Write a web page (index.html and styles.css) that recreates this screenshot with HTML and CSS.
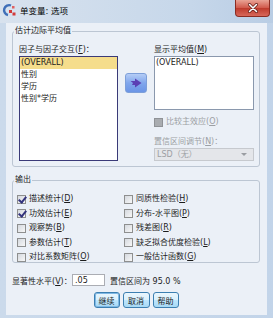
FILE: index.html
```html
<!DOCTYPE html>
<html lang="zh-CN">
<head>
    <meta charset="UTF-8">
    <title>单变量: 选项</title>
    <link rel="stylesheet" href="styles.css">
</head>
<body>
    <div class="window">
        <div class="titlebar">
            <svg class="app-icon" width="14" height="14" viewBox="0 0 14 14">
                <path d="M9 2.5 A5 5 0 1 0 6 12" fill="none" stroke="#3f6fb8" stroke-width="2.4"/>
                <rect x="7" y="7" width="3" height="3" fill="#d23a3a"/>
                <rect x="10.5" y="9.5" width="3" height="3" fill="#d23a3a"/>
                <rect x="10" y="3" width="2.5" height="2.5" fill="#e06060"/>
            </svg>
            <span class="title">单变量: 选项</span>
            <div class="close-btn">
                <svg width="12" height="10" viewBox="0 0 12 10">
                    <path d="M2.5 1.5 L9.5 8.5 M9.5 1.5 L2.5 8.5" stroke="#5a1a14" stroke-width="3" stroke-linecap="round"/>
                    <path d="M2.5 1.5 L9.5 8.5 M9.5 1.5 L2.5 8.5" stroke="#fff" stroke-width="1.6" stroke-linecap="round"/>
                </svg>
            </div>
        </div>

        <div class="client">
            <!-- 估计边际平均值 -->
            <fieldset class="group emm">
                <legend>估计边际平均值</legend>
                <div class="emm-body">
                    <div class="col-left">
                        <div class="field-label">因子与因子交互(<u>F</u>)：</div>
                        <ul class="listbox factors">
                            <li class="selected">(OVERALL)</li>
                            <li>性别</li>
                            <li>学历</li>
                            <li>性别*学历</li>
                        </ul>
                    </div>
                    <div class="col-mid">
                        <button type="button" class="move-btn">
                            <svg width="12" height="10" viewBox="0 0 12 10">
                                <path d="M0.5 3 L5 3 L5 0.5 L11.5 5 L5 9.5 L5 7 L2 7 L3 5 Z" fill="#5b40b4"/>
                            </svg>
                        </button>
                    </div>
                    <div class="col-right">
                        <div class="field-label">显示平均值(<u>M</u>)</div>
                        <ul class="listbox means">
                            <li>(OVERALL)</li>
                        </ul>
                        <div class="check disabled compare"><span class="box"></span><span>比较主效应(<u>O</u>)</span></div>
                        <div class="field-label disabled adjust">置信区间调节(<u>N</u>)：</div>
                        <div class="select disabled"><span>LSD（无）</span><span class="caret"></span></div>
                    </div>
                </div>
            </fieldset>

            <!-- 输出 -->
            <fieldset class="group output">
                <legend>输出</legend>
                <div class="check-grid">
                    <div class="check"><span class="box checked"></span><span>描述统计(<u>D</u>)</span></div>
                    <div class="check"><span class="box checked"></span><span>功效估计(<u>E</u>)</span></div>
                    <div class="check"><span class="box"></span><span>观察势(<u>B</u>)</span></div>
                    <div class="check"><span class="box"></span><span>参数估计(<u>T</u>)</span></div>
                    <div class="check"><span class="box"></span><span>对比系数矩阵(<u>O</u>)</span></div>
                    <div class="check"><span class="box"></span><span>同质性检验(<u>H</u>)</span></div>
                    <div class="check"><span class="box"></span><span>分布-水平图(<u>P</u>)</span></div>
                    <div class="check"><span class="box"></span><span>残差图(<u>R</u>)</span></div>
                    <div class="check"><span class="box"></span><span>缺乏拟合优度检验(<u>L</u>)</span></div>
                    <div class="check"><span class="box"></span><span>一般估计函数(<u>G</u>)</span></div>
                </div>
            </fieldset>

            <div class="sig-row">
                <span class="sig-label">显著性水平(<u>V</u>)：</span>
                <input type="text" class="sig-input" value=".05">
                <span class="ci-text">置信区间为 95.0 %</span>
            </div>

            <div class="buttons">
                <button type="button" class="btn default">继续</button>
                <button type="button" class="btn wide">取消</button>
                <button type="button" class="btn">帮助</button>
            </div>
        </div>
    </div>
</body>
</html>
```

FILE: styles.css
```css
* {
    box-sizing: border-box;
}

body {
    margin: 0;
    background: #c8d8ea;
    font-family: "DejaVu Sans", "Noto Sans CJK SC", sans-serif;
    font-size: 8px;
    color: #1c1c1c;
}

u {
    text-decoration: underline;
}

.window {
    width: 273px;
    height: 318px;
    display: flex;
    flex-direction: column;
    padding: 0 6px 3px;
    background: linear-gradient(to right, #cbdaeb, #c2d4e9);
}

/* title bar */
.titlebar {
    height: 23px;
    margin: 0 -6px;
    display: flex;
    align-items: flex-start;
    background: linear-gradient(to right, #d8e2ee, #c6d7ea 70%, #b9cde4);
}

.app-icon {
    margin: 3px 0 0 2px;
}

.title {
    margin: 6px 0 0 4px;
    font-size: 8.5px;
    line-height: 10px;
    color: #000;
}

.close-btn {
    margin: 0 3px 0 auto;
    width: 35px;
    height: 17px;
    display: flex;
    align-items: center;
    justify-content: center;
    border: 1px solid #8b2c22;
    border-top: none;
    border-radius: 0 0 4px 4px;
    background: linear-gradient(#e9a395, #d0584a 50%, #bd3a2c 51%, #d8685a);
}

/* client area */
.client {
    flex: 1;
    display: flex;
    flex-direction: column;
    padding: 3px 7px 0 6px;
    background: #ebf0f7;
}

.group {
    margin: 0;
    min-width: 0;
    border: 1px solid #bcc6d3;
    border-radius: 3px;
}

.group legend {
    padding: 0 1px;
    line-height: 10px;
    height: 10px;
}

.emm {
    padding: 9px 4px 5px 6px;
}

.emm legend {
    margin-left: -5px;
}

.emm-body {
    display: flex;
}

.col-left {
    width: 99px;
}

.col-mid {
    width: 22px;
    margin: 0 7px;
}

.col-right {
    width: 100px;
}

.field-label {
    line-height: 10px;
    height: 10px;
    white-space: nowrap;
}

.disabled {
    color: #9c9fa4;
}

.listbox {
    list-style: none;
    margin: 1px 0 0;
    padding: 0;
    background: #fff;
}

.listbox li {
    line-height: 12px;
    height: 12px;
    padding-left: 1px;
    white-space: nowrap;
}

.factors {
    height: 105px;
    border: 1px solid #3a3a78;
}

.factors .selected {
    background: #f5dd8c;
}

.means {
    height: 54px;
    border: 1px solid #8a98ad;
}

.move-btn {
    margin-top: 28px;
    width: 22px;
    height: 20px;
    padding: 0;
    display: flex;
    align-items: center;
    justify-content: center;
    border: 1px solid #7d9fd9;
    border-radius: 3px;
    background: linear-gradient(#b5cdf6, #80a6ec 50%, #6b95e6);
}

/* checkboxes */
.check {
    display: flex;
    align-items: center;
    gap: 3px;
    height: 10px;
    line-height: 10px;
    white-space: nowrap;
}

.box {
    flex: none;
    width: 9px;
    height: 9px;
    border: 1px solid #8e8f8f;
    background: linear-gradient(135deg, #d5d9df, #f7f7f7);
    position: relative;
}

.box.checked::after {
    content: "";
    position: absolute;
    left: 2px;
    top: -1px;
    width: 3px;
    height: 6px;
    border: solid #34347e;
    border-width: 0 2px 2px 0;
    transform: rotate(40deg);
}

.check.disabled .box {
    border-color: #8f9296;
    background: #a9acb0;
}

.compare {
    margin-top: 7px;
}

.adjust {
    margin-top: 10px;
}

.select {
    margin-top: 1px;
    height: 13px;
    line-height: 11px;
    padding-left: 2px;
    border: 1px solid #c6c9ce;
    background: #e4e6ea;
    display: flex;
    align-items: center;
}

.caret {
    margin-left: auto;
    margin-right: 6px;
    border-left: 3px solid transparent;
    border-right: 3px solid transparent;
    border-top: 3px solid #9a9da2;
}

/* output group */
.output {
    margin-top: 8px;
    padding: 9px 4px 0 4px;
}

.output legend {
    margin-left: -3px;
}

.check-grid {
    display: grid;
    grid-auto-flow: column;
    grid-template-rows: repeat(5, 10px);
    grid-template-columns: 107px 1fr;
    row-gap: 4.5px;
}

/* significance row */
.sig-row {
    margin-top: 11px;
    height: 12px;
    display: flex;
    align-items: center;
    white-space: nowrap;
}

.sig-label {
    width: 60px;
}

.sig-input {
    width: 33px;
    height: 12px;
    margin: 0;
    padding: 0 2px;
    border: 1px solid #abadb3;
    font: inherit;
    line-height: 10px;
    background: #fff;
    color: #1c1c1c;
}

.ci-text {
    margin-left: 5px;
}

/* buttons */
.buttons {
    margin-top: 6px;
    display: flex;
    justify-content: center;
    gap: 3px;
}

.btn {
    width: 26px;
    height: 16px;
    padding: 0;
    font: inherit;
    color: #1c1c1c;
    border: 1px solid #3c7fb1;
    border-radius: 3px;
    background: linear-gradient(#eaf6fd, #d9f0fc 50%, #bee6fd 51%, #a7d9f5);
}

.btn.wide {
    width: 27px;
}

.btn.default {
    box-shadow: inset 0 0 0 1px #7fb8e4;
}
```
